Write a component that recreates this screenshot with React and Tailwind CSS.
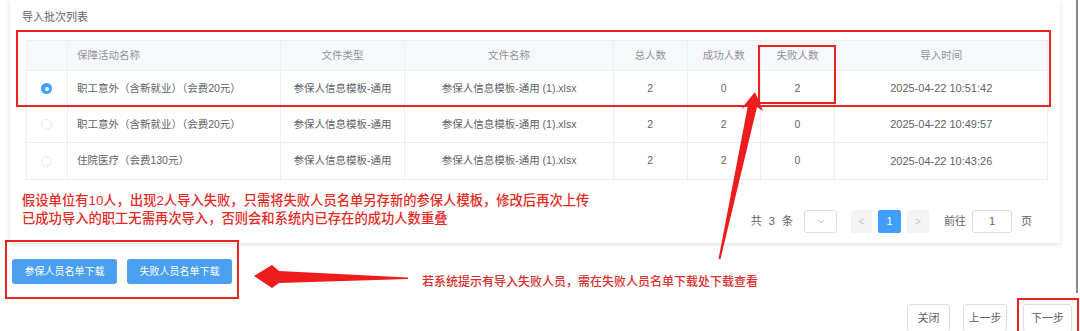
import React from "react";

const cols = [
  { w: "w-[41px]", align: "justify-center" },
  { w: "w-[213px]", align: "justify-start pl-[9px]" },
  { w: "w-[125px]", align: "justify-center" },
  { w: "w-[209px]", align: "justify-center" },
  { w: "w-[74px]", align: "justify-center" },
  { w: "w-[73px]", align: "justify-center" },
  { w: "w-[75px]", align: "justify-center" },
  { w: "w-[212px]", align: "justify-center" },
];

const headers = ["", "保障活动名称", "文件类型", "文件名称", "总人数", "成功人数", "失败人数", "导入时间"];

const rows = [
  { on: true, name: "职工意外（含新就业）（会费20元）", total: "2", ok: "0", fail: "2", time: "2025-04-22 10:51:42" },
  { on: false, name: "职工意外（含新就业）（会费20元）", total: "2", ok: "2", fail: "0", time: "2025-04-22 10:49:57" },
  { on: false, name: "住院医疗（会费130元）", total: "2", ok: "2", fail: "0", time: "2025-04-22 10:43:26" },
];

function Radio({ on }) {
  if (on) {
    return (
      <span className="w-[11px] h-[11px] rounded-full bg-[#409eff] flex items-center justify-center">
        <span className="w-[4px] h-[4px] rounded-full bg-white" />
      </span>
    );
  }
  return <span className="w-[11px] h-[11px] rounded-full border border-[#e4e7ed] bg-white" />;
}

function Cell({ i, children }) {
  return (
    <div className={`${cols[i].w} ${cols[i].align} flex items-center h-full ${i < 7 ? "border-r border-[#ebeef5]" : ""}`}>
      {children}
    </div>
  );
}

export default function App() {
  return (
    <div
      className="relative w-[1080px] h-[331px] overflow-hidden bg-white"
      style={{ fontFamily: '"Liberation Sans", "Noto Sans CJK SC", sans-serif' }}
    >
      {/* card */}
      <div className="ml-[10px] w-[1050px] bg-white shadow-[0_1px_5px_rgba(0,0,0,0.13)] pl-[16px] pr-[12px] pt-[10px] pb-[10px]">
        <div className="text-[11px] leading-[14px] text-[#606266] -ml-[4px]">导入批次列表</div>
        <div className="mt-[16px] border border-[#ebeef5] text-[10.5px]">
          <div className="flex h-[30px] bg-[#f7f8fa] text-[#909399] border-b border-[#ebeef5]">
            {headers.map((h, i) => (
              <Cell key={i} i={i}>{h}</Cell>
            ))}
          </div>
          {rows.map((r, k) => (
            <div key={k} className={`flex h-[36px] text-[#606266] ${k < 2 ? "border-b border-[#ebeef5]" : ""}`}>
              <Cell i={0}><Radio on={r.on} /></Cell>
              <Cell i={1}>{r.name}</Cell>
              <Cell i={2}>参保人信息模板-通用</Cell>
              <Cell i={3}>参保人信息模板-通用 (1).xlsx</Cell>
              <Cell i={4}>{r.total}</Cell>
              <Cell i={5}>{r.ok}</Cell>
              <Cell i={6}>{r.fail}</Cell>
              <Cell i={7}><span className="text-[11px]">{r.time}</span></Cell>
            </div>
          ))}
        </div>
        <div className="flex justify-between items-start pt-[12px]">
          <div className="-ml-[4px] text-[13.3px] leading-[18px] font-medium text-[#e62a1f]">
            <div>假设单位有10人，出现2人导入失败，只需将失败人员名单另存新的参保人模板，修改后再次上传</div>
            <div>已成功导入的职工无需再次导入，否则会和系统内已存在的成功人数重叠</div>
          </div>
          <div className="mt-[18px] mr-[16px] flex items-center text-[11px] text-[#606266]">
            <span className="tracking-[2px]">共 3 条</span>
            <div className="ml-[9px] w-[33px] h-[23px] border border-[#dcdfe6] rounded-[3px] flex items-center justify-center">
              <svg width="8" height="5" viewBox="0 0 8 5"><path d="M1 1l3 3 3-3" fill="none" stroke="#c0c4cc" strokeWidth="1" /></svg>
            </div>
            <div className="ml-[14px] w-[21px] h-[23px] bg-[#f4f4f5] rounded-[2px] flex items-center justify-center text-[#c0c4cc] text-[10px]">&lt;</div>
            <div className="ml-[6px] w-[23px] h-[23px] bg-[#409eff] rounded-[2px] flex items-center justify-center text-white">1</div>
            <div className="ml-[6px] w-[22px] h-[23px] bg-[#f4f4f5] rounded-[2px] flex items-center justify-center text-[#c0c4cc] text-[10px]">&gt;</div>
            <span className="ml-[15px]">前往</span>
            <div className="ml-[6px] w-[40px] h-[23px] border border-[#dcdfe6] rounded-[3px] flex items-center justify-center">1</div>
            <span className="ml-[9px]">页</span>
          </div>
        </div>
      </div>

      {/* download buttons + annotation */}
      <div className="flex items-start mt-[16px] pl-[12px]">
        <button className="w-[105px] h-[25px] bg-[#4a9ff0] rounded-[3px] text-white text-[10px]">参保人员名单下载</button>
        <button className="ml-[10px] w-[105px] h-[25px] bg-[#4a9ff0] rounded-[3px] text-white text-[10px]">失败人员名单下载</button>
        <svg width="190" height="32" viewBox="0 0 190 32" className="shrink-0">
          <polygon points="22,17 40,6 47,12 176,18.5 176,20 47,24 40,29" fill="#ee1c1c" />
        </svg>
        <span className="mt-[15px] text-[12px] leading-[16px] font-medium text-[#d9302c]">
          若系统提示有导入失败人员，需在失败人员名单下载处下载查看
        </span>
      </div>

      {/* footer buttons */}
      <div className="flex justify-end pr-[8px] mt-[13px] text-[11px] text-[#606266]">
        <button className="w-[43px] h-[28px] border border-[#dcdfe6] rounded-[3px] bg-white">关闭</button>
        <button className="ml-[13px] w-[44px] h-[28px] border border-[#dcdfe6] rounded-[3px] bg-white">上一步</button>
        <button className="ml-[16px] w-[49px] h-[28px] border border-[#dcdfe6] rounded-[3px] bg-white">下一步</button>
      </div>

      {/* annotations overlay */}
      <div className="absolute left-[16px] top-[30px] w-[1035px] h-[77px] border-2 border-[#e8231f] pointer-events-none" />
      <div className="absolute left-[758px] top-[45px] w-[78px] h-[59px] border-2 border-[#e8231f] pointer-events-none" />
      <div className="absolute left-[5px] top-[240px] w-[234px] h-[59px] border-2 border-[#e8231f] pointer-events-none" />
      <div className="absolute left-[1017px] top-[298px] w-[62px] h-[40px] border-2 border-[#e8231f] pointer-events-none" />
      <div className="absolute left-[1076px] top-0 w-[2px] h-[293px] bg-[#8a8a8a]" />
      <svg className="absolute left-0 top-0 pointer-events-none" width="1080" height="331">
        <polygon points="755,92 763,111 757,107 720.5,259 718.5,259 748,105 741,109" fill="#ee1c1c" />
      </svg>
    </div>
  );
}
